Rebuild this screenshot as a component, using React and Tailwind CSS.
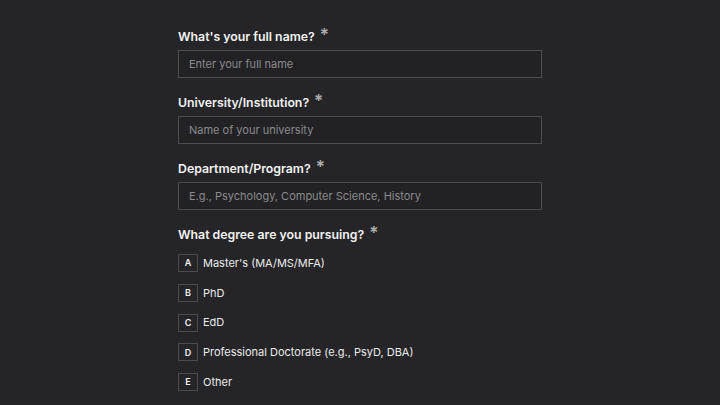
const fields = [
  { label: "What's your full name?", placeholder: "Enter your full name" },
  { label: "University/Institution?", placeholder: "Name of your university" },
  { label: "Department/Program?", placeholder: "E.g., Psychology, Computer Science, History" },
];

const options = [
  { key: "A", text: "Master's (MA/MS/MFA)" },
  { key: "B", text: "PhD" },
  { key: "C", text: "EdD" },
  { key: "D", text: "Professional Doctorate (e.g., PsyD, DBA)" },
  { key: "E", text: "Other" },
];

function Label({ children }) {
  return (
    <div className="flex h-4 items-center text-[12.3px] font-semibold leading-4 text-[#f2f2f2]">
      {children}
      <span className="ml-[5px] -mt-[5px] text-[17px] font-semibold leading-4 text-[#aeaeb0]">*</span>
    </div>
  );
}

export default function App() {
  return (
    <div className="h-[405px] w-[720px] overflow-hidden bg-[#252527] font-['Inter',sans-serif]">
      <div className="mx-auto flex w-[364px] flex-col pt-[29px]">
        {fields.map((f) => (
          <div key={f.label} className="mb-[17px] flex flex-col gap-[5px]">
            <Label>{f.label}</Label>
            <input
              placeholder={f.placeholder}
              className="h-[28px] w-full border border-[#4c4c4f] bg-[#222224] px-[10px] text-[11px] text-white outline-none placeholder:text-[#8a8a8d]"
            />
          </div>
        ))}
        <Label>What degree are you pursuing?</Label>
        <div className="mt-[11px] flex flex-col gap-[11.75px]">
          {options.map((o) => (
            <div key={o.key} className="flex h-[18px] items-center gap-[5px]">
              <div className="flex h-[18px] w-[20px] items-center justify-center border border-[#4c4c4f] text-[9px] font-semibold text-[#f2f2f2]">
                {o.key}
              </div>
              <span className="text-[11px] text-[#ebebeb]">{o.text}</span>
            </div>
          ))}
        </div>
      </div>
    </div>
  );
}
